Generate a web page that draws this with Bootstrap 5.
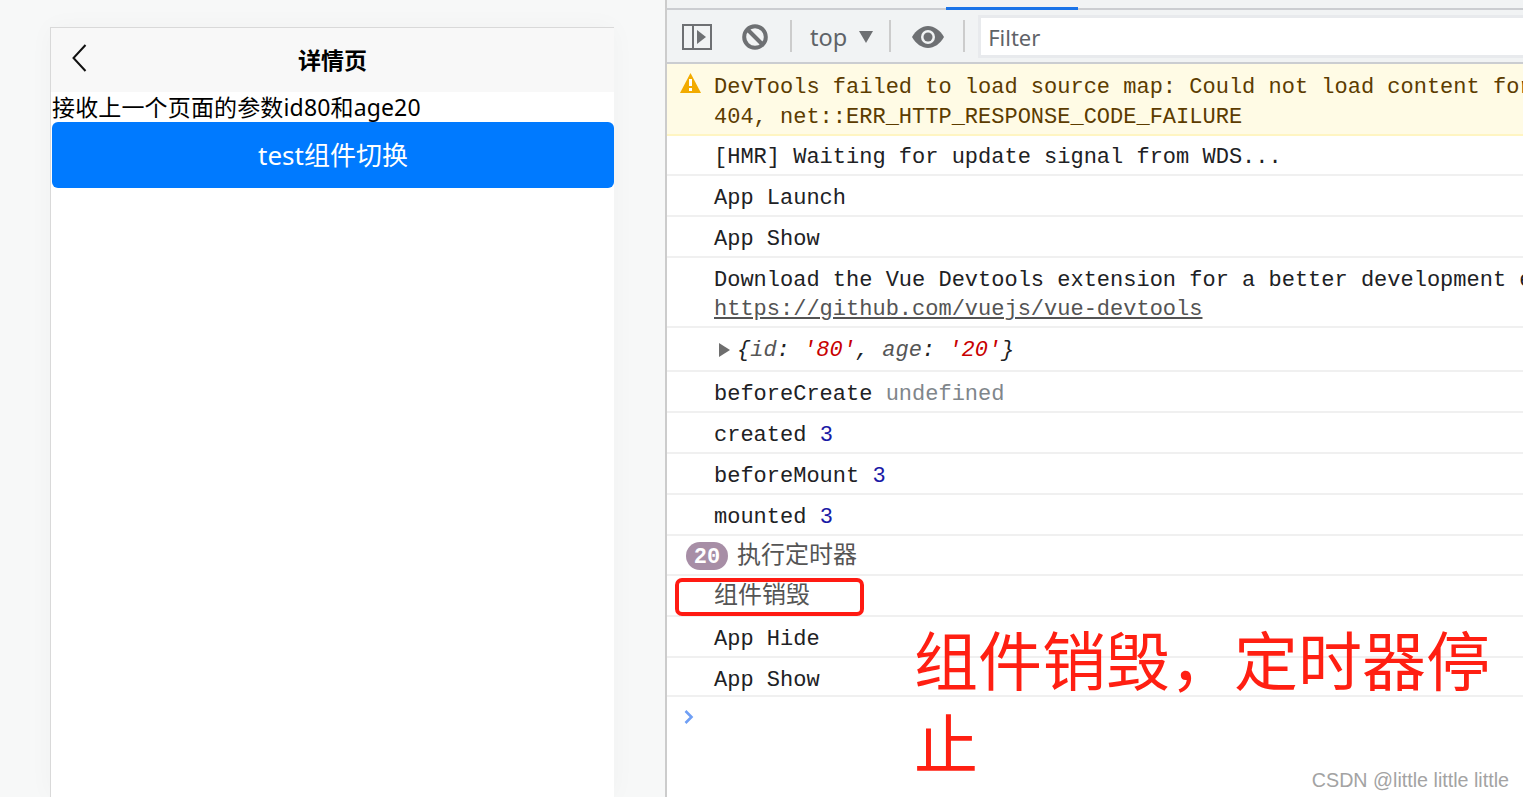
<!DOCTYPE html>
<html lang="zh">
<head>
<meta charset="utf-8">
<title>详情页</title>
<link href="https://cdn.jsdelivr.net/npm/bootstrap@5.3.0/dist/css/bootstrap.min.css" rel="stylesheet">
<style>
html,body{height:100%;overflow:hidden}
body{background:#fff;font-family:"Noto Sans","Noto Sans CJK SC",sans-serif;color:#000;position:relative}
.left-pane{width:665px;height:797px;flex:none;padding:27px 51px 0 50px;background:#f7f8f8}
.phone{height:100%;background:#fff;border:1px solid #d9d9d9;border-bottom:0;border-right:0;box-shadow:0 0 24px rgba(0,0,0,.03)}
.phone-head{height:64px;background:#f8f8f8;padding:0 20px}
.phone-back{position:absolute;left:20px;top:15px}
.phone-title{font-size:23px;font-weight:700;line-height:1;padding-top:1px}
.phone-text{font-size:23px;line-height:30px;padding-left:1px;white-space:nowrap;letter-spacing:.15px}
.phone-btn{display:block;width:562px;height:66px;margin-left:1px;background:#007aff;color:#fff;border:0;border-radius:6px;font-size:26px;padding:0;line-height:66px}
.devtools{flex:1;min-width:0;height:797px;border-left:2px solid #ccc;background:#fff;overflow:hidden}
.tab-strip{height:10px;background:#f1f3f4;border-bottom:2px solid #cbcdd1;padding-top:7px}
.tab-active{width:132px;height:3px;margin-left:279px;background:#1a73e8}
.dt-toolbar{height:54px;background:#f1f3f4;border-bottom:2px solid #cbcdd1;padding-left:15px;padding-top:11px}
.tb-sep{width:2px;height:32px;background:#ccc;flex:none;margin-top:-1px}
.tb-top{font-family:"Noto Sans",sans-serif;font-size:23.5px;color:#5f6368;line-height:30px;flex:none;margin-top:1px}
.tb-ico{flex:none}
.tb-filter{flex:1 1 0;min-width:0;height:43px;margin-left:13px;background:#fff;border:3px solid #e8eaed;border-right:0;font-family:"Noto Sans",sans-serif;font-size:22px;color:#5f6368;padding-left:7px;line-height:39px;margin-top:-6px}
.log-row{font-family:"Liberation Mono",monospace;font-size:22px;line-height:29px;padding:0 0 0 47px;border-bottom:2px solid #f0f0f0;color:#202124;white-space:nowrap;overflow:hidden}
.log-warn{height:72px;background:#fffbe5;border-bottom-color:#fff5c2;color:#5c3c00;padding-top:9px;line-height:30px}
.h40{height:40px;padding-top:7px}
.h41{height:41px;padding-top:8px}
.h70{height:70px;padding-top:8px}
.h44{height:44px;padding-top:8px}
.h39{height:39px;padding-top:8px}
.log-link{color:#545454;text-decoration:underline}
.log-gray{color:#80868b}
.log-num{color:#1a1aa6}
.log-red{color:#c80000}
.log-key{color:#565656}
.log-cn{font-family:"Noto Sans CJK SC",sans-serif;color:#555;font-size:24px;line-height:24px;display:inline-block;vertical-align:top;margin-top:-3px}
.log-cn-first{margin-top:-2px}
.log-badge{display:inline-block;width:42px;height:28px;border-radius:14px;background:#a78ea6;color:#fff;font-weight:700;text-align:center;line-height:31px;font-size:22px;vertical-align:top;margin-right:9px;margin-top:-1px}
.log-tri{position:absolute;left:52px;top:15px}
.log-warn-ico{position:absolute;left:13px;top:9px}
.log-prompt{position:absolute;left:16px;top:12px}
.obj-line{margin-left:23px}
.badge-row{padding-left:19px}
.anno-box{position:absolute;left:675px;top:578px;width:189px;height:38px;border:4px solid #ff1a12;border-radius:7px}
.anno-text{position:absolute;left:914px;top:616px;width:600px;font-family:"Noto Sans CJK SC",sans-serif;font-size:64px;line-height:83px;color:#ff1f12}
.watermark{position:absolute;right:14px;top:768px;font-family:"Liberation Sans",sans-serif;font-size:19.7px;line-height:24px;color:#a3a3a3}
.ml-30{margin-left:30px}.ml-22{margin-left:22px}.ml-21{margin-left:21px}.ml-19{margin-left:19px}.ml-18{margin-left:18px}.ml-12{margin-left:12px}.ml-16{margin-left:16px}
.mt-eye{margin-top:5px}.mt-tri{margin-top:10px}.mt-ico{margin-top:3px}
</style>
</head>
<body class="d-flex">
<div class="left-pane">
  <div class="phone">
    <div class="phone-head position-relative d-flex align-items-center justify-content-center">
      <svg class="phone-back" width="18" height="30" viewBox="0 0 18 30"><path d="M14.5 2 2.5 15l12 13" fill="none" stroke="#111" stroke-width="2"/></svg>
      <div class="phone-title">详情页</div>
    </div>
    <div class="phone-text">接收上一个页面的参数id80和age20</div>
    <button class="phone-btn" type="button">test组件切换</button>
  </div>
</div>
<div class="devtools">
  <div class="tab-strip"><div class="tab-active"></div></div>
  <div class="dt-toolbar d-flex align-items-start">
    <svg width="30" height="26" viewBox="0 0 30 26" class="tb-ico mt-ico"><path d="M1 1h28v24H1zM11 1v24" fill="none" stroke="#6e7073" stroke-width="2"/><path d="M15 6l9 7-9 7z" fill="#6e7073"/></svg>
    <svg width="26" height="26" viewBox="0 0 26 26" class="tb-ico ml-30 mt-ico"><circle cx="13" cy="13" r="10.8" fill="none" stroke="#6e7073" stroke-width="4"/><path d="M5.5 5.5l15 15" stroke="#6e7073" stroke-width="4"/></svg>
    <div class="tb-sep ml-22"></div>
    <div class="tb-top ml-18">top</div>
    <svg width="14" height="12" viewBox="0 0 14 12" class="tb-ico ml-12 mt-tri"><path d="M0 0h14L7 12z" fill="#6e7073"/></svg>
    <div class="tb-sep ml-16"></div>
    <svg width="32" height="22" viewBox="0 0 32 22" class="tb-ico ml-21 mt-eye"><path d="M0 11C4 4 10 0 16 0s12 4 16 11c-4 7-10 11-16 11S4 18 0 11z" fill="#6e7073"/><circle cx="16" cy="11" r="7" fill="#f1f3f4"/><circle cx="16" cy="11" r="4.5" fill="#6e7073"/></svg>
    <div class="tb-sep ml-19"></div>
    <div class="tb-filter">Filter</div>
  </div>
  <div class="log-row log-warn position-relative">
    <svg class="log-warn-ico" width="21" height="20" viewBox="0 0 21 20"><path d="M10.5 0 21 20H0z" fill="#f2ab00"/><rect x="9" y="6" width="3" height="7" fill="#fff"/><rect x="9" y="15" width="3" height="3" fill="#fff"/></svg>
    DevTools failed to load source map: Could not load content for<br>404, net::ERR_HTTP_RESPONSE_CODE_FAILURE
  </div>
  <div class="log-row h40">[HMR] Waiting for update signal from WDS...</div>
  <div class="log-row h41">App Launch</div>
  <div class="log-row h41">App Show</div>
  <div class="log-row h70">Download the Vue Devtools extension for a better development experience<br><span class="log-link">https://github.com/vuejs/vue-devtools</span></div>
  <div class="log-row h44 position-relative">
    <svg class="log-tri" width="11" height="14" viewBox="0 0 11 14"><path d="M0 0l11 7-11 7z" fill="#6e6e6e"/></svg>
    <span class="fst-italic obj-line">{<span class="log-key">id</span>: <span class="log-red">'80'</span>, <span class="log-key">age</span>: <span class="log-red">'20'</span>}</span>
  </div>
  <div class="log-row h41">beforeCreate <span class="log-gray">undefined</span></div>
  <div class="log-row h41">created <span class="log-num">3</span></div>
  <div class="log-row h41">beforeMount <span class="log-num">3</span></div>
  <div class="log-row h41">mounted <span class="log-num">3</span></div>
  <div class="log-row h40 badge-row"><span class="log-badge">20</span><span class="log-cn log-cn-first">执行定时器</span></div>
  <div class="log-row h41"><span class="log-cn">组件销毁</span></div>
  <div class="log-row h41">App Hide</div>
  <div class="log-row h39">App Show</div>
  <div class="position-relative">
    <svg class="log-prompt" width="12" height="16" viewBox="0 0 12 16"><path d="M2.5 2l6 6-6 6" fill="none" stroke="#6f9ff5" stroke-width="2.6"/></svg>
  </div>
</div>
<div class="anno-box"></div>
<div class="anno-text">组件销毁，定时器停止</div>
<div class="watermark">CSDN @little little little</div>
<script src="https://cdn.jsdelivr.net/npm/bootstrap@5.3.0/dist/js/bootstrap.bundle.min.js"></script>
</body>
</html>
